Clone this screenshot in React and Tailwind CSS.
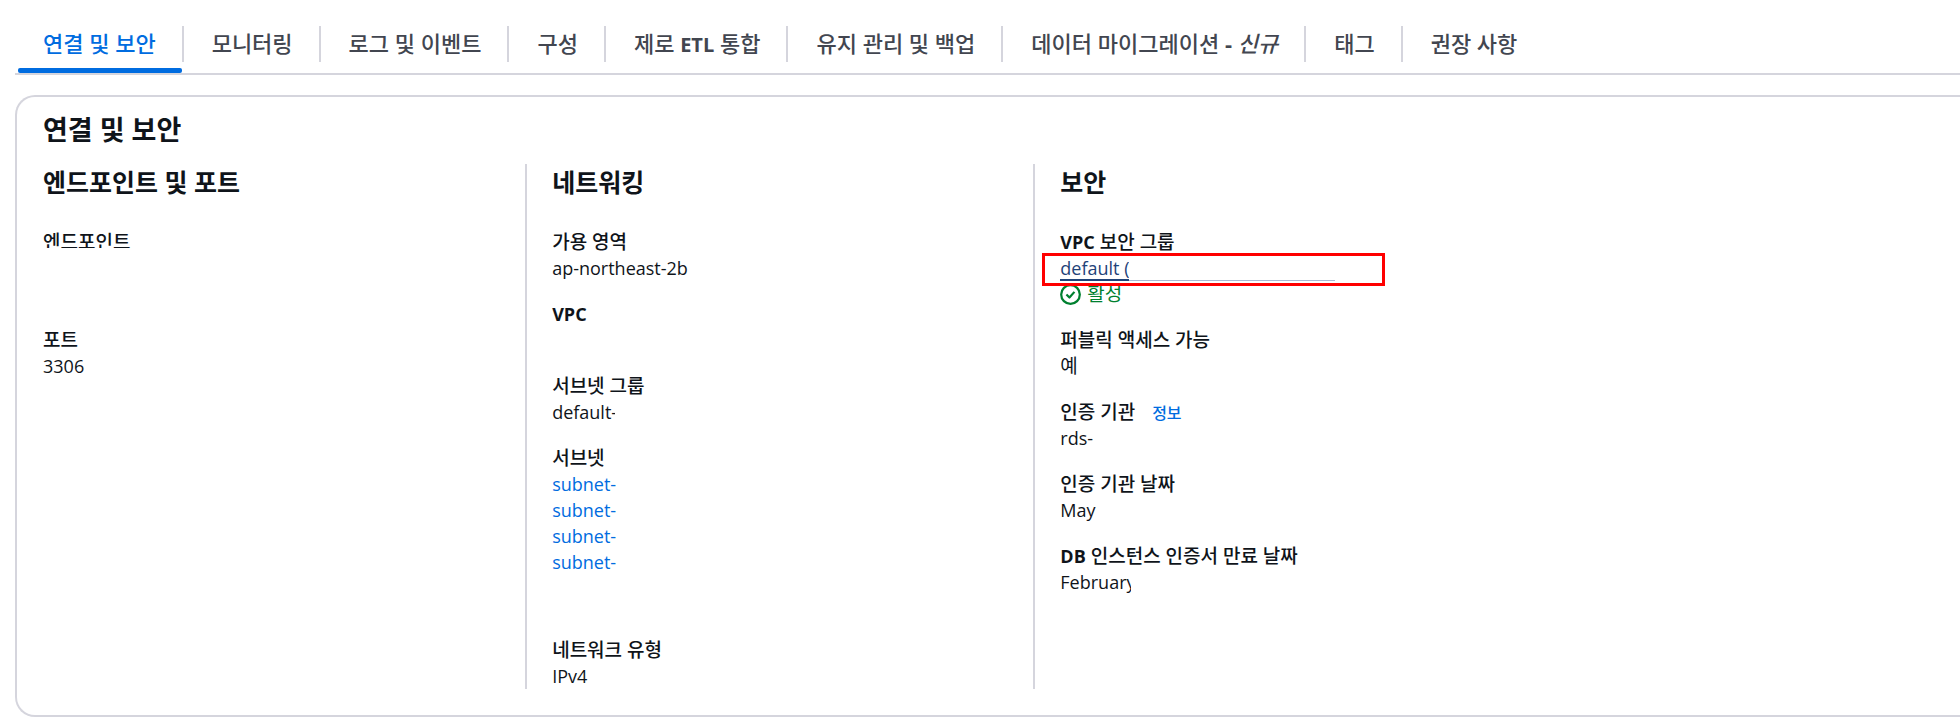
const TABS = [
  { id: 'connectivity', label: '연결 및 보안' },
  { id: 'monitoring', label: '모니터링' },
  { id: 'logs', label: '로그 및 이벤트' },
  { id: 'configuration', label: '구성' },
  { id: 'zero-etl', label: <>제로 <Latin>ETL</Latin> 통합</> },
  { id: 'maintenance', label: '유지 관리 및 백업' },
  { id: 'migration', label: <>데이터 마이그레이션 <b>-</b> <em>신규</em></> },
  { id: 'tags', label: '태그' },
  { id: 'recommendations', label: '권장 사항' },
]

const SUBNETS = ['subnet-', 'subnet-', 'subnet-', 'subnet-']

export default function App() {
  return (
    <div className="overflow-hidden bg-white pt-[22px] pb-1 pl-[15px] font-['Open_Sans','Noto_Sans_CJK_KR',sans-serif] text-[#0f141a]">
      {/* Tabs */}
      <div role="tablist" className="flex border-b-2 border-[#d5d5dd]">
        {TABS.map((tab, i) => (
          <Tab key={tab.id} active={i === 0} last={i === TABS.length - 1}>{tab.label}</Tab>
        ))}
      </div>

      {/* Details panel */}
      <section className="mt-5 rounded-l-[20px] border-2 border-r-0 border-[#d5d5dd] pt-[17px] pb-[26px]">
        <h2 className="h-8 pl-[26px] text-[27px] leading-8 font-bold">연결 및 보안</h2>

        <div className="mt-[18px] grid grid-cols-[17fr_17fr_31fr]">
          <Column title="엔드포인트 및 포트">
            <Field label={<span className="block h-[19px] overflow-hidden">엔드포인트</span>} className="h-[78px]" />
            <Field label="포트">3306</Field>
          </Column>

          <Column title="네트워킹" divided>
            <Field label="가용 영역">ap-northeast-2b</Field>
            <Field label={<Latin small>VPC</Latin>} className="h-[52px]" />
            <Field label="서브넷 그룹">
              <span className="block w-[63px] overflow-hidden">default-</span>
            </Field>
            <Field label="서브넷" className="h-[172px]">
              {SUBNETS.map((subnet, i) => (
                <a key={i} href="#" className="block w-fit text-[#006ce0]">{subnet}</a>
              ))}
            </Field>
            <Field label="네트워크 유형">IPv4</Field>
          </Column>

          <Column title="보안" divided>
            <Field label={<><Latin small>VPC</Latin> 보안 그룹</>}>
              <div className="relative">
                <a href="#" className="block h-[26px] w-[275px] border-b border-[#a9b9d3] text-[#1f4379]">
                  <span className="block h-[26px] w-[69px] overflow-hidden border-b-2 border-[#1f4379] whitespace-nowrap">default (</span>
                </a>
                <div className="pointer-events-none absolute -top-0.5 -left-[18px] h-[33px] w-[343px] border-3 border-[#ff0000]" />
              </div>
              <div className="flex items-center gap-1.5 text-[#00802f]">
                <StatusIcon />
                <span className="text-[19px]">활성</span>
              </div>
            </Field>
            <Field label="퍼블릭 액세스 가능"><span className="text-[19px]">예</span></Field>
            <Field label={<>인증 기관 <a href="#" className="ml-3 text-base text-[#006ce0]">정보</a></>}>rds-</Field>
            <Field label="인증 기관 날짜">May</Field>
            <Field label={<><Latin small>DB</Latin> 인스턴스 인증서 만료 날짜</>}>
              <span className="block w-[71px] overflow-hidden">February</span>
            </Field>
          </Column>
        </div>
      </section>
    </div>
  )
}

function Tab({ active, last, children }) {
  return (
    <button
      role="tab"
      aria-selected={active}
      className={`relative flex pt-1 pb-[11px] text-[22px] font-medium whitespace-nowrap ${active ? 'text-[#006ce0]' : 'text-[#424650]'}`}
    >
      <span className={`h-9 pr-[26px] pl-7 leading-[34px] ${last ? '' : 'border-r-2 border-[#d5d5dd]'}`}>{children}</span>
      {active && <span className="absolute right-0.5 bottom-0 left-[3px] h-[5px] rounded-xs bg-[#006ce0]" />}
    </button>
  )
}

function Column({ title, divided, children }) {
  return (
    <div className={divided ? 'border-l-2 border-[#d5d5dd] pl-[25px]' : 'pl-[26px]'}>
      <h3 className="h-9 text-[25px] leading-9 font-bold">{title}</h3>
      <dl className="mt-[29px] flex flex-col gap-5">{children}</dl>
    </div>
  )
}

function Field({ label, className, children }) {
  return (
    <div className={className}>
      <dt className="text-[19px] leading-[26px] font-medium">{label}</dt>
      <dd className="text-[18px] leading-[26px]">{children}</dd>
    </div>
  )
}

// Latin runs sit a step below the Hangul around them
function Latin({ small, children }) {
  return <span className={small ? 'text-[18px] font-bold' : 'text-[20px] font-bold'}>{children}</span>
}

function StatusIcon() {
  return (
    <svg viewBox="0 0 16 16" fill="none" stroke="currentColor" strokeWidth="1.7" strokeLinejoin="round" className="size-[21px]">
      <circle cx="8" cy="8" r="7.1" />
      <path d="M4.9 8 7.2 10.3 11 6" />
    </svg>
  )
}
